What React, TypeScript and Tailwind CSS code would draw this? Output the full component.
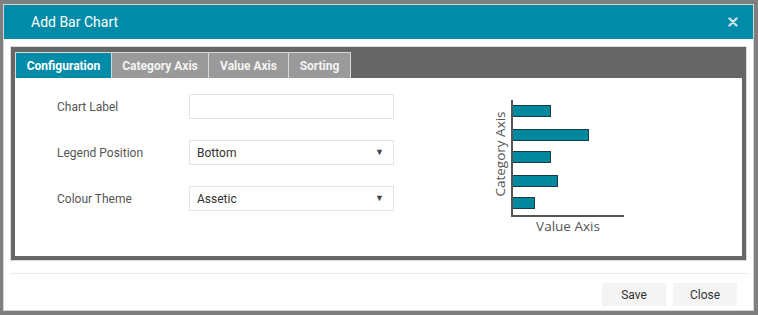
import { useState } from "react";

const tabs = ["Configuration", "Category Axis", "Value Axis", "Sorting"];

const tabWidths: Record<string, string> = {
  Configuration: "w-[97px]",
  "Category Axis": "w-[98px]",
  "Value Axis": "w-[81px]",
  Sorting: "w-[63px]",
};

function SelectBox({ value }: { value: string }) {
  return (
    <div className="w-[205px] h-[25px] border border-[#e4e4e4] bg-white flex items-center justify-between pl-[7px] pr-[9px] text-[12px] text-[#333]">
      <span>{value}</span>
      <span className="text-[9px] text-[#444]">▼</span>
    </div>
  );
}

function Row({ label, children }: { label: string; children: React.ReactNode }) {
  return (
    <div className="flex items-center h-[25px]">
      <div className="w-[132px] text-[12px] text-[#555]">{label}</div>
      {children}
    </div>
  );
}

function ChartPreview() {
  const bars = [
    { y: 10, w: 38 },
    { y: 34, w: 76 },
    { y: 56, w: 38 },
    { y: 80, w: 45 },
    { y: 102, w: 22 },
  ];
  return (
    <svg width="150" height="145" viewBox="0 0 150 145">
      {bars.map((b, i) => (
        <rect
          key={i}
          x="22.5"
          y={b.y + 0.5}
          width={b.w}
          height="11"
          fill="#00889e"
          stroke="#1d3b42"
          strokeWidth="1"
        />
      ))}
      <line x1="22" y1="5" x2="22" y2="122" stroke="#555" strokeWidth="2" />
      <line x1="21" y1="121" x2="134" y2="121" stroke="#555" strokeWidth="2" />
      <text
        x="0"
        y="0"
        transform="translate(15 59) rotate(-90)"
        textAnchor="middle"
        fontFamily="'Open Sans', sans-serif"
        fontSize="13.5"
        fill="#555"
      >
        Category Axis
      </text>
      <text
        x="78"
        y="136"
        textAnchor="middle"
        fontFamily="'Open Sans', sans-serif"
        fontSize="13.5"
        fill="#555"
      >
        Value Axis
      </text>
    </svg>
  );
}

export default function App() {
  const [active, setActive] = useState("Configuration");

  return (
    <div
      className="w-[758px] h-[315px] bg-[#7f7f7f] pt-[4px] pl-[3px] overflow-hidden"
      style={{ fontFamily: "Roboto, 'Liberation Sans', sans-serif" }}
    >
      <div className="w-[751px] h-[307px] bg-white border border-[#d4d4d4] flex flex-col">
        {/* Header */}
        <div className="h-[34px] bg-[#008ca8] flex items-center justify-between pl-[27px] pr-[15px]">
          <span className="text-[14px] text-white">Add Bar Chart</span>
          <svg width="10" height="10" viewBox="0 0 10 10">
            <path d="M1.5 1.5 L8.5 8.5 M8.5 1.5 L1.5 8.5" stroke="#c6e4eb" strokeWidth="2.4" strokeLinecap="round" />
          </svg>
        </div>

        {/* Tab frame */}
        <div className="mx-[6px] mt-[7px] border border-[#dcdcdc]">
          <div className="bg-[#666666] pt-[5px] px-[4px] pb-[4px]">
            <div className="flex h-[26px]">
              {tabs.map((t) => (
                <button
                  key={t}
                  onClick={() => setActive(t)}
                  className={`${tabWidths[t]} h-[26px] border border-b-0 border-[#d8d8d8] -ml-px first:ml-0 text-[12px] font-bold flex items-center justify-center ${
                    active === t ? "bg-[#008ca8] text-white" : "bg-[#9a9a9a] text-[#f4f4f4]"
                  }`}
                >
                  {t}
                </button>
              ))}
            </div>
            <div className="bg-white h-[178px] flex">
              <div className="pl-[42px] pt-[16px] flex flex-col gap-[21px]">
                <Row label="Chart Label">
                  <div className="w-[205px] h-[25px] border border-[#e4e4e4] bg-white" />
                </Row>
                <Row label="Legend Position">
                  <SelectBox value="Bottom" />
                </Row>
                <Row label="Colour Theme">
                  <SelectBox value="Assetic" />
                </Row>
              </div>
              <div className="ml-[96px] pt-[17px]">
                <ChartPreview />
              </div>
            </div>
          </div>
        </div>

        {/* Footer */}
        <div className="mx-[6px] mt-[12px] h-px bg-[#e8e8e8]" />
        <div className="flex justify-end gap-[7px] pr-[16px] mt-[9px]">
          <button className="w-[64px] h-[23px] bg-[#f4f4f4] text-[12px] text-[#333]">Save</button>
          <button className="w-[64px] h-[23px] bg-[#f4f4f4] text-[12px] text-[#333]">Close</button>
        </div>
      </div>
    </div>
  );
}
